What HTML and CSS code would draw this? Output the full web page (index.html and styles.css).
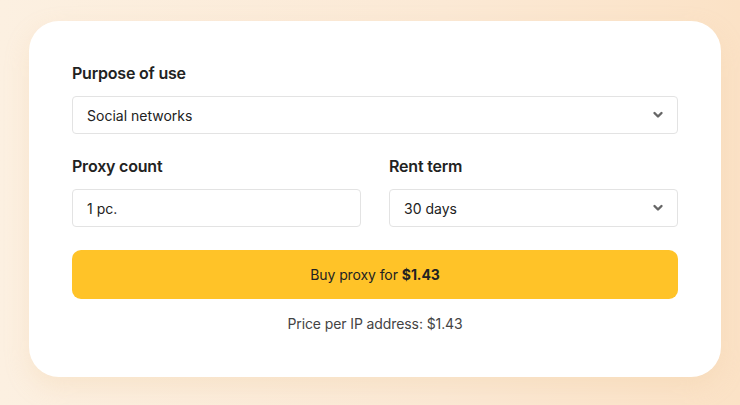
FILE: index.html
```html
<!DOCTYPE html>
<html>
<head>
<meta charset="utf-8">
<link rel="stylesheet" href="styles.css">
</head>
<body>
<div class="page">
  <div class="card">
    <div class="field">
      <div class="label">Purpose of use</div>
      <div class="control select">
        <span>Social networks</span>
        <svg class="chev" width="12" height="8" viewBox="0 0 12 8"><path d="M2.5 2 L6 5.5 L9.5 2" fill="none" stroke="#666" stroke-width="2.4" stroke-linecap="round" stroke-linejoin="round"/></svg>
      </div>
    </div>
    <div class="row">
      <div class="field">
        <div class="label">Proxy count</div>
        <div class="control input"><span>1 pc.</span></div>
      </div>
      <div class="field">
        <div class="label">Rent term</div>
        <div class="control select lower">
          <span>30 days</span>
          <svg class="chev" width="12" height="8" viewBox="0 0 12 8"><path d="M2.5 2 L6 5.5 L9.5 2" fill="none" stroke="#666" stroke-width="2.4" stroke-linecap="round" stroke-linejoin="round"/></svg>
        </div>
      </div>
    </div>
    <div class="btn">Buy proxy for <b>$1.43</b></div>
    <div class="price">Price per IP address: $1.43</div>
  </div>
</div>
</body>
</html>
```
FILE: styles.css
```css
html, body {
  margin: 0;
  padding: 0;
}
body {
  width: 740px;
  height: 405px;
  overflow: hidden;
  background: linear-gradient(90deg, #fcf0e1 0%, #fbe9d5 60%, #fbe2c6 100%);
  font-family: "Inter", "Noto Sans", sans-serif;
  color: #222;
}
.page {
  padding: 21px 19px 0 29px;
}
.card {
  width: 692px;
  height: 356px;
  box-sizing: border-box;
  background: #fff;
  border-radius: 30px;
  padding: 42px 43px 0 43px;
  box-shadow: 0 10px 24px rgba(240, 200, 150, 0.25);
}
.label {
  font-size: 16px;
  font-weight: 600;
  color: #222;
  letter-spacing: -0.2px;
  line-height: 20px;
  margin-bottom: 13px;
}
.control {
  height: 38px;
  box-sizing: border-box;
  border: 1px solid #e3e3e3;
  border-radius: 4px;
  display: flex;
  align-items: center;
  justify-content: space-between;
  padding: 0 13px 0 14px;
  font-size: 14px;
  color: #222;
}
.card > .field {
  margin-bottom: 22px;
}
.row {
  display: grid;
  grid-template-columns: 289px 289px;
  gap: 28px;
  margin-bottom: 23px;
}
.lower {
  margin-top: 1px;
}
.chev {
  display: block;
}
.btn {
  height: 49px;
  background: #ffc328;
  border-radius: 9px;
  display: flex;
  align-items: center;
  justify-content: center;
  font-size: 14px;
  color: #222;
  letter-spacing: -0.1px;
}
.btn b {
  font-weight: 700;
  margin-left: 4px;
}
.price {
  text-align: center;
  margin-top: 16px;
  font-size: 14px;
  color: #444;
  letter-spacing: -0.1px;
}
```
